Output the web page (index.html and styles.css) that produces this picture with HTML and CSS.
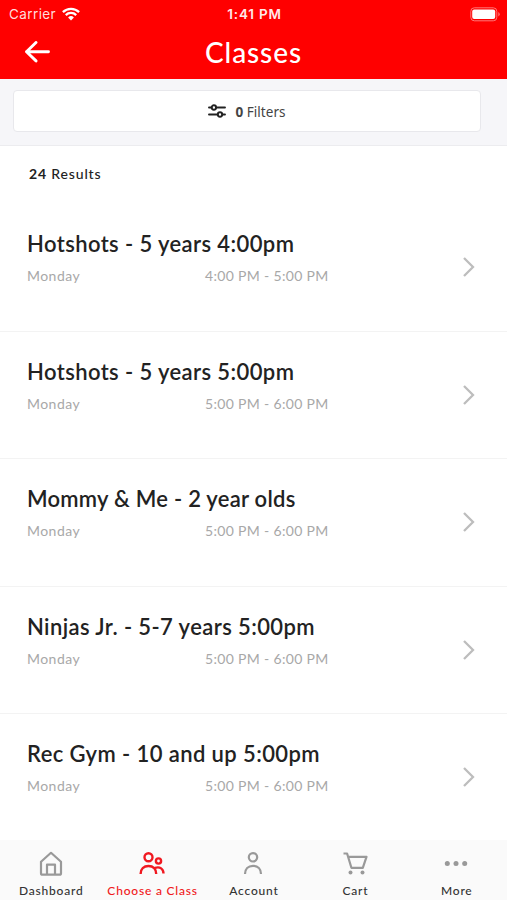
FILE: index.html
```html
<!DOCTYPE html>
<html lang="en">
<head>
<meta charset="utf-8">
<title>Classes</title>
<link rel="stylesheet" href="styles.css">
</head>
<body>
<div class="app">
  <header class="header">
    <div class="status">
      <div class="carrier"><span class="carrier-name">Carrier</span>
        <svg class="wifi" width="18" height="14" viewBox="0 0 18 14" fill="none" stroke="#fff" stroke-width="2.3"><path d="M.9 5.1a11.6 11.6 0 0 1 16.2 0M3.8 8.1a7.4 7.4 0 0 1 10.4 0"/><path d="M9 13.4 6.1 10.5a4.1 4.1 0 0 1 5.8 0z" fill="#fff" stroke="none"/></svg>
      </div>
      <div class="time">1:41 PM</div>
      <svg class="battery" width="30" height="15" viewBox="0 0 30 15"><rect x=".8" y=".8" width="26" height="13" rx="3.5" fill="none" stroke="#ff7777"/><rect x="2.2" y="2.6" width="23" height="9.4" rx="2" fill="#fff"/><path d="M28.3 5v4.6q1.4-.8 1.4-2.3T28.3 5z" fill="#ff7777"/></svg>
    </div>
    <div class="title-bar">
      <svg class="back" width="26" height="22" viewBox="0 0 26 22" fill="none" stroke="#fff" stroke-width="2.9" stroke-linecap="round" stroke-linejoin="round"><path d="M24.500 10.700H2.500M12 1.500 2.500 10.700l9.500 9.200"/></svg>
      <h1 class="title">Classes</h1>
    </div>
  </header>
  <div class="filter-bar">
    <button class="filter">
      <svg width="18" height="14" viewBox="0 0 18 14" fill="none" stroke="#222" stroke-width="1.9" stroke-linecap="round"><path d="M1 3.500h2.600M8.200 3.500H17M1 10.500h8.600M14.400 10.500H17"/><circle cx="5.900" cy="3.500" r="2.200"/><circle cx="12" cy="10.500" r="2.200"/></svg>
      <span class="filter-text"><b>0</b> Filters</span>
    </button>
  </div>
  <main class="list">
    <p class="results"><b>24</b> Results</p>
    <article class="row"><div><h2 class="name">Hotshots - 5 years 4:00pm</h2><div class="meta"><span class="day">Monday</span><span class="hours">4:00 PM - 5:00 PM</span></div></div><svg class="chevron" width="14" height="22" viewBox="0 0 14 22"><path d="m2 2 9 9-9 9"/></svg></article>
    <article class="row"><div><h2 class="name">Hotshots - 5 years 5:00pm</h2><div class="meta"><span class="day">Monday</span><span class="hours">5:00 PM - 6:00 PM</span></div></div><svg class="chevron" width="14" height="22" viewBox="0 0 14 22"><path d="m2 2 9 9-9 9"/></svg></article>
    <article class="row"><div><h2 class="name words">Mommy &amp; Me - 2 year olds</h2><div class="meta"><span class="day">Monday</span><span class="hours">5:00 PM - 6:00 PM</span></div></div><svg class="chevron" width="14" height="22" viewBox="0 0 14 22"><path d="m2 2 9 9-9 9"/></svg></article>
    <article class="row"><div><h2 class="name">Ninjas Jr. - 5-7 years 5:00pm</h2><div class="meta"><span class="day">Monday</span><span class="hours">5:00 PM - 6:00 PM</span></div></div><svg class="chevron" width="14" height="22" viewBox="0 0 14 22"><path d="m2 2 9 9-9 9"/></svg></article>
    <article class="row"><div><h2 class="name">Rec Gym - 10 and up 5:00pm</h2><div class="meta"><span class="day">Monday</span><span class="hours">5:00 PM - 6:00 PM</span></div></div><svg class="chevron" width="14" height="22" viewBox="0 0 14 22"><path d="m2 2 9 9-9 9"/></svg></article>
  </main>
  <nav class="tabs">
    <a class="tab"><svg width="28" height="28" viewBox="0 0 28 28"><path d="M4 11.700 14 2.800l10 8.900v11.500q0 1.500-1.500 1.500h-17Q4 24.700 4 23.200zM10 24.700V14.700h8v10"/></svg><span>Dashboard</span></a>
    <a class="tab active"><svg width="28" height="28" viewBox="0 0 28 28"><circle cx="10.500" cy="7.300" r="4"/><circle cx="20.500" cy="11" r="2.600"/><path d="M2.600 24c0-5 3.200-8 7.900-8s7.700 3 7.700 8M17 17.900c5-1.800 8.500 1.200 8.500 5.500"/></svg><span>Choose a Class</span></a>
    <a class="tab"><svg width="28" height="28" viewBox="0 0 28 28"><circle cx="14" cy="7.300" r="4.200"/><path d="M6 24c0-5 3.200-8.200 8-8.200s8 3.200 8 8.200"/></svg><span>Account</span></a>
    <a class="tab"><svg width="28" height="28" viewBox="0 0 28 28"><path d="M2.500 3.500h3.600l4.300 14.300h11.400l3.700-11H7.200"/><g class="dots"><circle cx="9.500" cy="22.500" r="2"/><circle cx="21.500" cy="22.500" r="2"/></g></svg><span>Cart</span></a>
    <a class="tab"><svg width="28" height="28" viewBox="0 0 28 28"><g class="dots"><circle cx="5.300" cy="13.500" r="2.500"/><circle cx="14" cy="13.500" r="2.500"/><circle cx="22.700" cy="13.500" r="2.500"/></g></svg><span>More</span></a>
  </nav>
</div>
</body>
</html>
```
FILE: styles.css
```css
* { box-sizing: border-box; }
body { margin: 0; background: #fff; font-family: Lato, "Open Sans", sans-serif; color: #222; }
h1, h2, p { margin: 0; }
svg { display: block; flex: none; }
.app { width: 507px; height: 900px; display: flex; flex-direction: column; overflow: hidden; }
.header { flex: none; height: 79px; background: #f00; color: #fff; }
.status { height: 27px; padding: 0 7px 0 9px; display: grid; grid-template-columns: 1fr auto 1fr; align-items: center; font-family: Inter, sans-serif; font-size: 13.5px; line-height: 28px; }
.carrier { display: flex; gap: 6px; align-items: center; }
.carrier-name { color: #ffdcdc; letter-spacing: .4px; }
.time { font-weight: 600; font-size: 13.5px; color: #ffe9e9; letter-spacing: .8px; }
.battery { justify-self: end; }
.title-bar { height: 50px; display: grid; grid-template-columns: 1fr auto 1fr; align-items: center; padding: 0 24px; }
.title { grid-column: 2; font-size: 28px; font-weight: 500; line-height: 50px; letter-spacing: .9px; }
.filter-bar { flex: none; height: 67px; padding: 11px 26px 13px 13px; background: #f6f6f9; border-bottom: 1px solid #ececef; }
.filter { width: 100%; height: 42px; padding: 0; border: 1px solid #e8e8ec; border-radius: 4px; background: #fff; display: flex; align-items: center; justify-content: center; gap: 9px; font-family: "Noto Sans", sans-serif; font-size: 13.5px; color: #444; }
.filter-text { letter-spacing: .05px; padding-top: 1px; }
.list { flex: 1; min-height: 0; overflow: hidden; }
.results { height: 58px; padding: 0 29px; line-height: 56px; font-size: 14px; font-weight: 500; letter-spacing: .85px; }
.results b { font-weight: 700; }
.row { height: 127.5px; border-bottom: 1px solid #f3f3f3; padding: 24px 31px 0 27px; display: flex; justify-content: space-between; }
.name { font-size: 22px; line-height: 32px; font-weight: 600; white-space: nowrap; letter-spacing: .4px; }
.words { letter-spacing: .25px; }
.meta { display: grid; grid-template-columns: 178px auto; font-size: 14px; line-height: 20px; margin-top: 6px; color: #a8a8a8; white-space: nowrap; justify-content: start; }
.day { letter-spacing: .45px; }
.hours { letter-spacing: .33px; }
.chevron { margin-top: 28px; fill: none; stroke: #bdbdbd; stroke-width: 2.3; }
.tabs { flex: none; height: 60px; background: #fafafa; display: grid; grid-template-columns: repeat(5, 101.4px); }
.tab { display: flex; flex-direction: column; align-items: center; padding-top: 10px; font-size: 12px; font-weight: 500; line-height: 18px; letter-spacing: .8px; color: #333; white-space: nowrap; }
.tab svg { fill: none; stroke: #999; stroke-width: 2.2; stroke-linejoin: round; margin-bottom: 4px; }
.tab span { padding-left: 1px; }
.tab .dots { fill: #999; stroke: none; }
.tab.active { color: #f01820; }
.active svg { stroke: #f01820; stroke-width: 2.4; }
```
